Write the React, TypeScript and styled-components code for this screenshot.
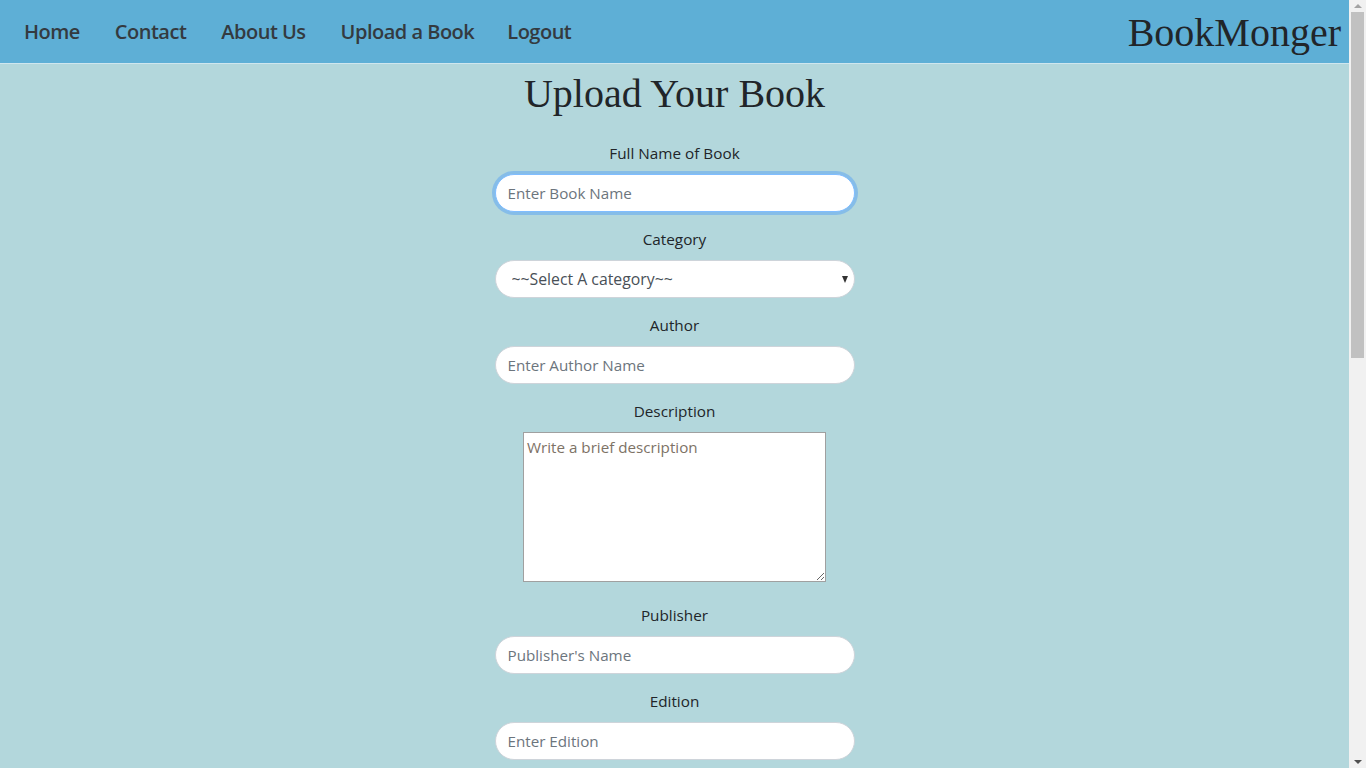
import React from "react";
import styled, { createGlobalStyle, css } from "styled-components";

const GlobalStyle = createGlobalStyle`
  body {
    margin: 0;
    padding-right: 17px;
    background: #b3d7dc;
    font-family: "Open Sans", "Noto Sans", sans-serif;
    color: #212529;
  }
  * { box-sizing: border-box; }
`;

const NavBar = styled.nav`
  height: 64px;
  background: #5eafd6;
  border-bottom: 1px solid #cfe6ee;
  display: flex;
  align-items: center;
  justify-content: space-between;
  padding: 0 8px 0 6.5px;
`;

const NavLinks = styled.ul`
  display: flex;
  align-items: center;
  list-style: none;
  margin: 0;
  padding: 0;
`;

const NavLink = styled.a<{ $tight?: boolean }>`
  display: block;
  padding: 0 ${(p) => (p.$tight ? 15.5 : 17.5)}px 0 17.5px;
  font-size: 20px;
  font-weight: 600;
  letter-spacing: -0.5px;
  color: #343a40;
  text-decoration: none;
  line-height: 30px;
`;

const Brand = styled.div`
  font-family: "Liberation Serif", "Times New Roman", serif;
  font-size: 40px;
  color: #212529;
  line-height: 46px;
  margin-top: 2px;
`;

const Main = styled.main`
  display: flex;
  flex-direction: column;
  align-items: center;
  padding-bottom: 311px;
`;

const Title = styled.h1`
  font-family: "Liberation Serif", "Times New Roman", serif;
  font-weight: 400;
  font-size: 40px;
  line-height: 44px;
  margin: 8px 0 25px;
  color: #212529;
`;

const Form = styled.form`
  display: flex;
  flex-direction: column;
  align-items: center;
  width: 360px;
`;

const Group = styled.div<{ $gap?: number }>`
  display: flex;
  flex-direction: column;
  align-items: center;
  width: 100%;
  margin-bottom: ${(p) => p.$gap ?? 15}px;
`;

const Label = styled.label`
  font-size: 15.3px;
  line-height: 24px;
  margin-bottom: 9px;
  color: #212529;
`;

const fieldBase = css`
  width: 360px;
  height: 38px;
  border-radius: 19px;
  border: 1px solid #ced4da;
  background: #fff;
  font-family: "Open Sans", "Noto Sans", sans-serif;
  font-size: 15.2px;
  color: #495057;
  outline: none;
`;

const Input = styled.input<{ $focused?: boolean }>`
  ${fieldBase};
  padding: 0 12px;
  &::placeholder {
    color: #6c757d;
  }
  ${(p) =>
    p.$focused &&
    css`
      border-color: #80bdff;
      box-shadow: 0 0 0 3px #86bde8;
    `}
`;

const SelectWrap = styled.div`
  position: relative;
  width: 360px;
`;

const Select = styled.select`
  ${fieldBase};
  appearance: none;
  -webkit-appearance: none;
  padding: 0 16px;
  font-size: 15.8px;
  color: #495057;
`;

const Caret = styled.span`
  position: absolute;
  right: 7px;
  top: 16px;
  width: 0;
  height: 0;
  border-left: 3.5px solid transparent;
  border-right: 3.5px solid transparent;
  border-top: 7px solid #333;
  pointer-events: none;
`;

const TextArea = styled.textarea`
  display: block;
  width: 303px;
  height: 150px;
  border: 1px solid #a0a0a0;
  padding: 2px 3px;
  font-family: "Open Sans", "Noto Sans", sans-serif;
  font-size: 15.2px;
  line-height: 24px;
  color: #212529;
  background: #fff;
  &::placeholder {
    color: #7d7266;
  }
`;

const FileInput = styled.input`
  font-family: "Open Sans", "Noto Sans", sans-serif;
  font-size: 14px;
`;

const SubmitButton = styled.button`
  margin-top: 8px;
  height: 38px;
  padding: 0 28px;
  border-radius: 19px;
  border: none;
  background: #5eafd6;
  color: #212529;
  font-family: "Open Sans", "Noto Sans", sans-serif;
  font-size: 16px;
`;

/* Imitation of the browser's classic scrollbar, which lies over the page edge */
const ScrollBar = styled.div`
  position: fixed;
  top: 0;
  right: 0;
  width: 17px;
  height: 100vh;
  background: #f1f1f1;
  display: flex;
  flex-direction: column;
  align-items: center;
`;

const ScrollArrow = styled.div<{ $down?: boolean }>`
  flex: none;
  height: 12px;
  width: 100%;
  display: flex;
  align-items: center;
  justify-content: center;
  &::before {
    content: "";
    width: 0;
    height: 0;
    border-left: 4px solid transparent;
    border-right: 4px solid transparent;
    ${(p) =>
      p.$down
        ? css`
            border-top: 4px solid #505050;
          `
        : css`
            border-bottom: 4px solid #a3a3a3;
          `}
  }
`;

const ScrollTrack = styled.div`
  flex: 1;
  width: 100%;
  display: flex;
  justify-content: center;
`;

const ScrollThumb = styled.div`
  width: 13px;
  height: 346px;
  background: #c1c1c1;
`;

const links = ["Home", "Contact", "About Us", "Upload a Book", "Logout"];

type Field = { label: string; placeholder: string };

const lowerFields: Field[] = [
  { label: "Publisher", placeholder: "Publisher's Name" },
  { label: "Edition", placeholder: "Enter Edition" },
  { label: "Language", placeholder: "Enter Language" },
  { label: "Number of Pages", placeholder: "Enter Pages" },
  { label: "ISBN", placeholder: "Enter ISBN" },
  { label: "Price", placeholder: "Enter Price" },
];

export default function App() {
  return (
    <>
      <GlobalStyle />
      <NavBar>
        <NavLinks>
          {links.map((l) => (
            <li key={l}>
              <NavLink href="#" $tight={l === "Upload a Book"}>
                {l}
              </NavLink>
            </li>
          ))}
        </NavLinks>
        <Brand>BookMonger</Brand>
      </NavBar>
      <Main>
        <Title>Upload Your Book</Title>
        <Form onSubmit={(e) => e.preventDefault()}>
          <Group>
            <Label>Full Name of Book</Label>
            <Input placeholder="Enter Book Name" $focused />
          </Group>
          <Group>
            <Label>Category</Label>
            <SelectWrap>
              <Select defaultValue="">
                <option value="">~~Select A category~~</option>
                <option>Fiction</option>
                <option>Non-Fiction</option>
                <option>Science</option>
              </Select>
              <Caret />
            </SelectWrap>
          </Group>
          <Group>
            <Label>Author</Label>
            <Input placeholder="Enter Author Name" />
          </Group>
          <Group $gap={21}>
            <Label>Description</Label>
            <TextArea placeholder="Write a brief description" />
          </Group>
          {lowerFields.map((f) => (
            <Group key={f.label}>
              <Label>{f.label}</Label>
              <Input placeholder={f.placeholder} />
            </Group>
          ))}
          <Group>
            <Label>Book Cover</Label>
            <FileInput type="file" />
          </Group>
          <Group>
            <Label>Book File</Label>
            <FileInput type="file" />
          </Group>
          <SubmitButton type="submit">Upload</SubmitButton>
        </Form>
      </Main>
      <ScrollBar aria-hidden>
        <ScrollArrow />
        <ScrollTrack>
          <ScrollThumb />
        </ScrollTrack>
        <ScrollArrow $down />
      </ScrollBar>
    </>
  );
}
